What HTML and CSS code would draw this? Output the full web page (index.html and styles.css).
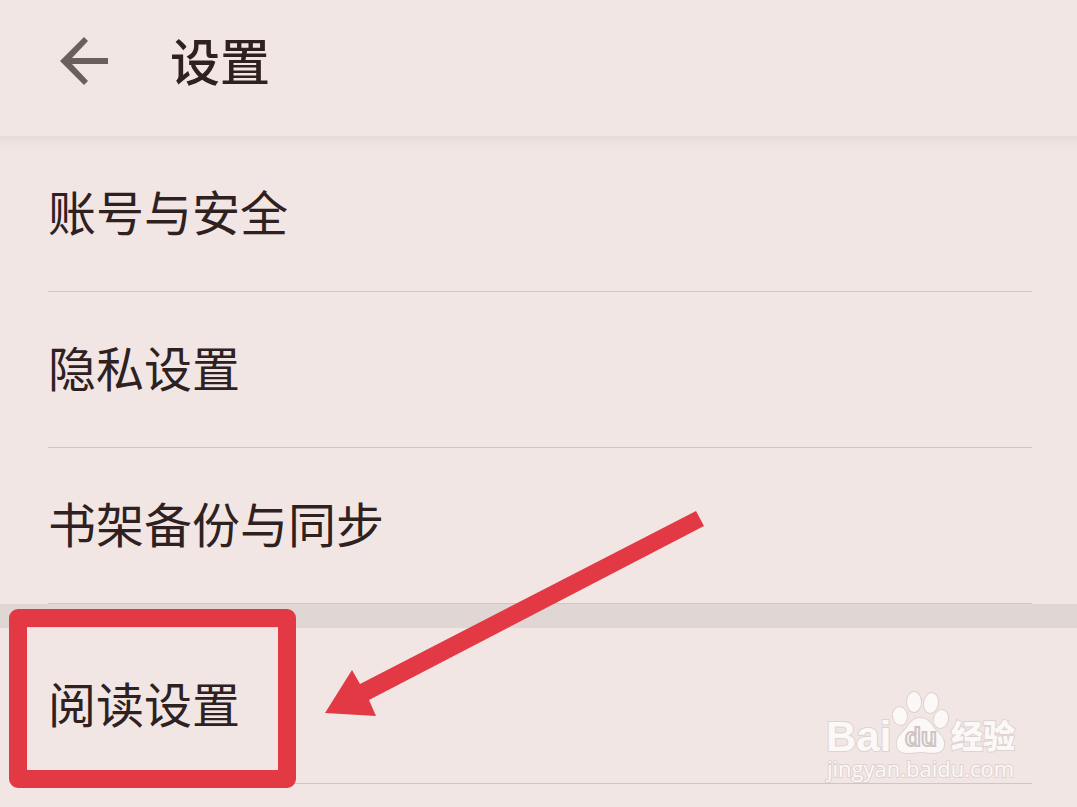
FILE: index.html
```html
<!DOCTYPE html>
<html lang="zh-CN">
<head>
<meta charset="utf-8">
<meta name="viewport" content="width=device-width, initial-scale=1">
<title>设置</title>
<link rel="stylesheet" href="styles.css">
</head>
<body>
<header class="topbar">
  <button class="back" type="button" aria-label="返回">
    <svg width="48" height="48" viewBox="0 0 48 48" aria-hidden="true"><path d="M48 21v6H12l16 17-4 4L0 24 24 0l4 4-16 17z"/></svg>
  </button>
  <h1 class="title">设置</h1>
</header>
<main class="settings">
  <ul class="group">
    <li class="row"><a class="link" href="#account">账号与安全</a></li>
    <li class="row"><a class="link" href="#privacy">隐私设置</a></li>
    <li class="row"><a class="link" href="#backup">书架备份与同步</a></li>
  </ul>
  <ul class="group">
    <li class="row"><a class="link" href="#reading">阅读设置</a>
      <span class="highlight"></span>
      <svg class="pointer" width="380" height="208" viewBox="0 0 380 208" aria-hidden="true"><path d="M0 204 27 161 35 175 371 2 379 17 44 191 51 207z"/></svg>
    </li>
  </ul>
  <svg class="watermark" width="200" height="96" viewBox="0 0 200 96" role="img" aria-label="Baidu 经验 jingyan.baidu.com">
    <g class="mark">
      <text class="brand" x="3" y="60">Bai</text>
      <ellipse cx="77" cy="25" rx="7" ry="9" transform="rotate(-10 77 25)"/>
      <ellipse cx="91" cy="11" rx="7" ry="10"/>
      <ellipse cx="108" cy="12" rx="7" ry="10" transform="rotate(10 108 12)"/>
      <ellipse cx="118" cy="28" rx="7" ry="9" transform="rotate(15 118 28)"/>
      <path d="M97 27c-8 0-11 7-16 13-6 6-8 9-7 15 1 6 6 7 12 7 5 0 7-1 12-1s7 1 12 1c8 0 12-4 11-11-1-6-6-9-10-14-4-6-7-10-14-10z"/>
      <text class="cjk" x="128" y="57">经验</text>
      <text class="url" x="4" y="86">jingyan.baidu.com</text>
    </g>
    <text class="du" x="82" y="55">du</text>
  </svg>
</main>
</body>
</html>
```
FILE: styles.css
```css
* {
  box-sizing: border-box;
}

body {
  margin: 0;
  min-height: 100vh;
  overflow-x: hidden;
  background: #f1e6e4;
  color: #2e211f;
  font-family: "Noto Sans CJK SC", sans-serif;
}

.topbar {
  display: flex;
  align-items: flex-start;
  gap: 62px;
  height: 136px;
  padding: 23px 60px 0;
}

.back {
  display: flex;
  margin-top: 14px;
  padding: 0;
  border: 0;
  background: none;
  fill: #6b5f5d;
}

.title {
  margin: 0;
  font-size: 50px;
  line-height: 72px;
  font-weight: 500;
}

.settings {
  position: relative;
  padding-bottom: 23px;
  background: linear-gradient(#e5dbd8, #efe4e1 10px, #f1e6e4 20px) no-repeat 0 0 / 100% 20px;
}

.group {
  margin: 0;
  padding: 0 45px 0 48px;
  list-style: none;
}

.group + .group {
  border-top: 24px solid #e0d6d3;
}

.row {
  position: relative;
  border-bottom: 1px solid #d0c5c2;
}

.link {
  display: block;
  padding: 38px 0 45px;
  color: inherit;
  font-size: 48px;
  line-height: 72px;
  text-decoration: none;
}

.highlight {
  position: absolute;
  top: -19px;
  left: -39px;
  width: 287px;
  height: 179px;
  border: 18px solid #e33944;
  border-radius: 9px;
  pointer-events: none;
}

.pointer {
  position: absolute;
  top: -119px;
  left: 277px;
  fill: #e33944;
  pointer-events: none;
}

.watermark {
  position: absolute;
  right: 54px;
  bottom: 20px;
}

.mark {
  fill: #fcf8f7;
  stroke: #ddd3d1;
  stroke-width: 2px;
  paint-order: stroke;
}

.brand {
  font: bold 42px "Liberation Sans", sans-serif;
}

.cjk {
  font: 900 32px "Noto Sans CJK SC", sans-serif;
}

.url {
  font: 22px "Open Sans", sans-serif;
}

.du {
  fill: #fcf8f7;
  stroke: #cfc4c2;
  stroke-width: 2px;
  font: bold 26px "Liberation Sans", sans-serif;
}
```
